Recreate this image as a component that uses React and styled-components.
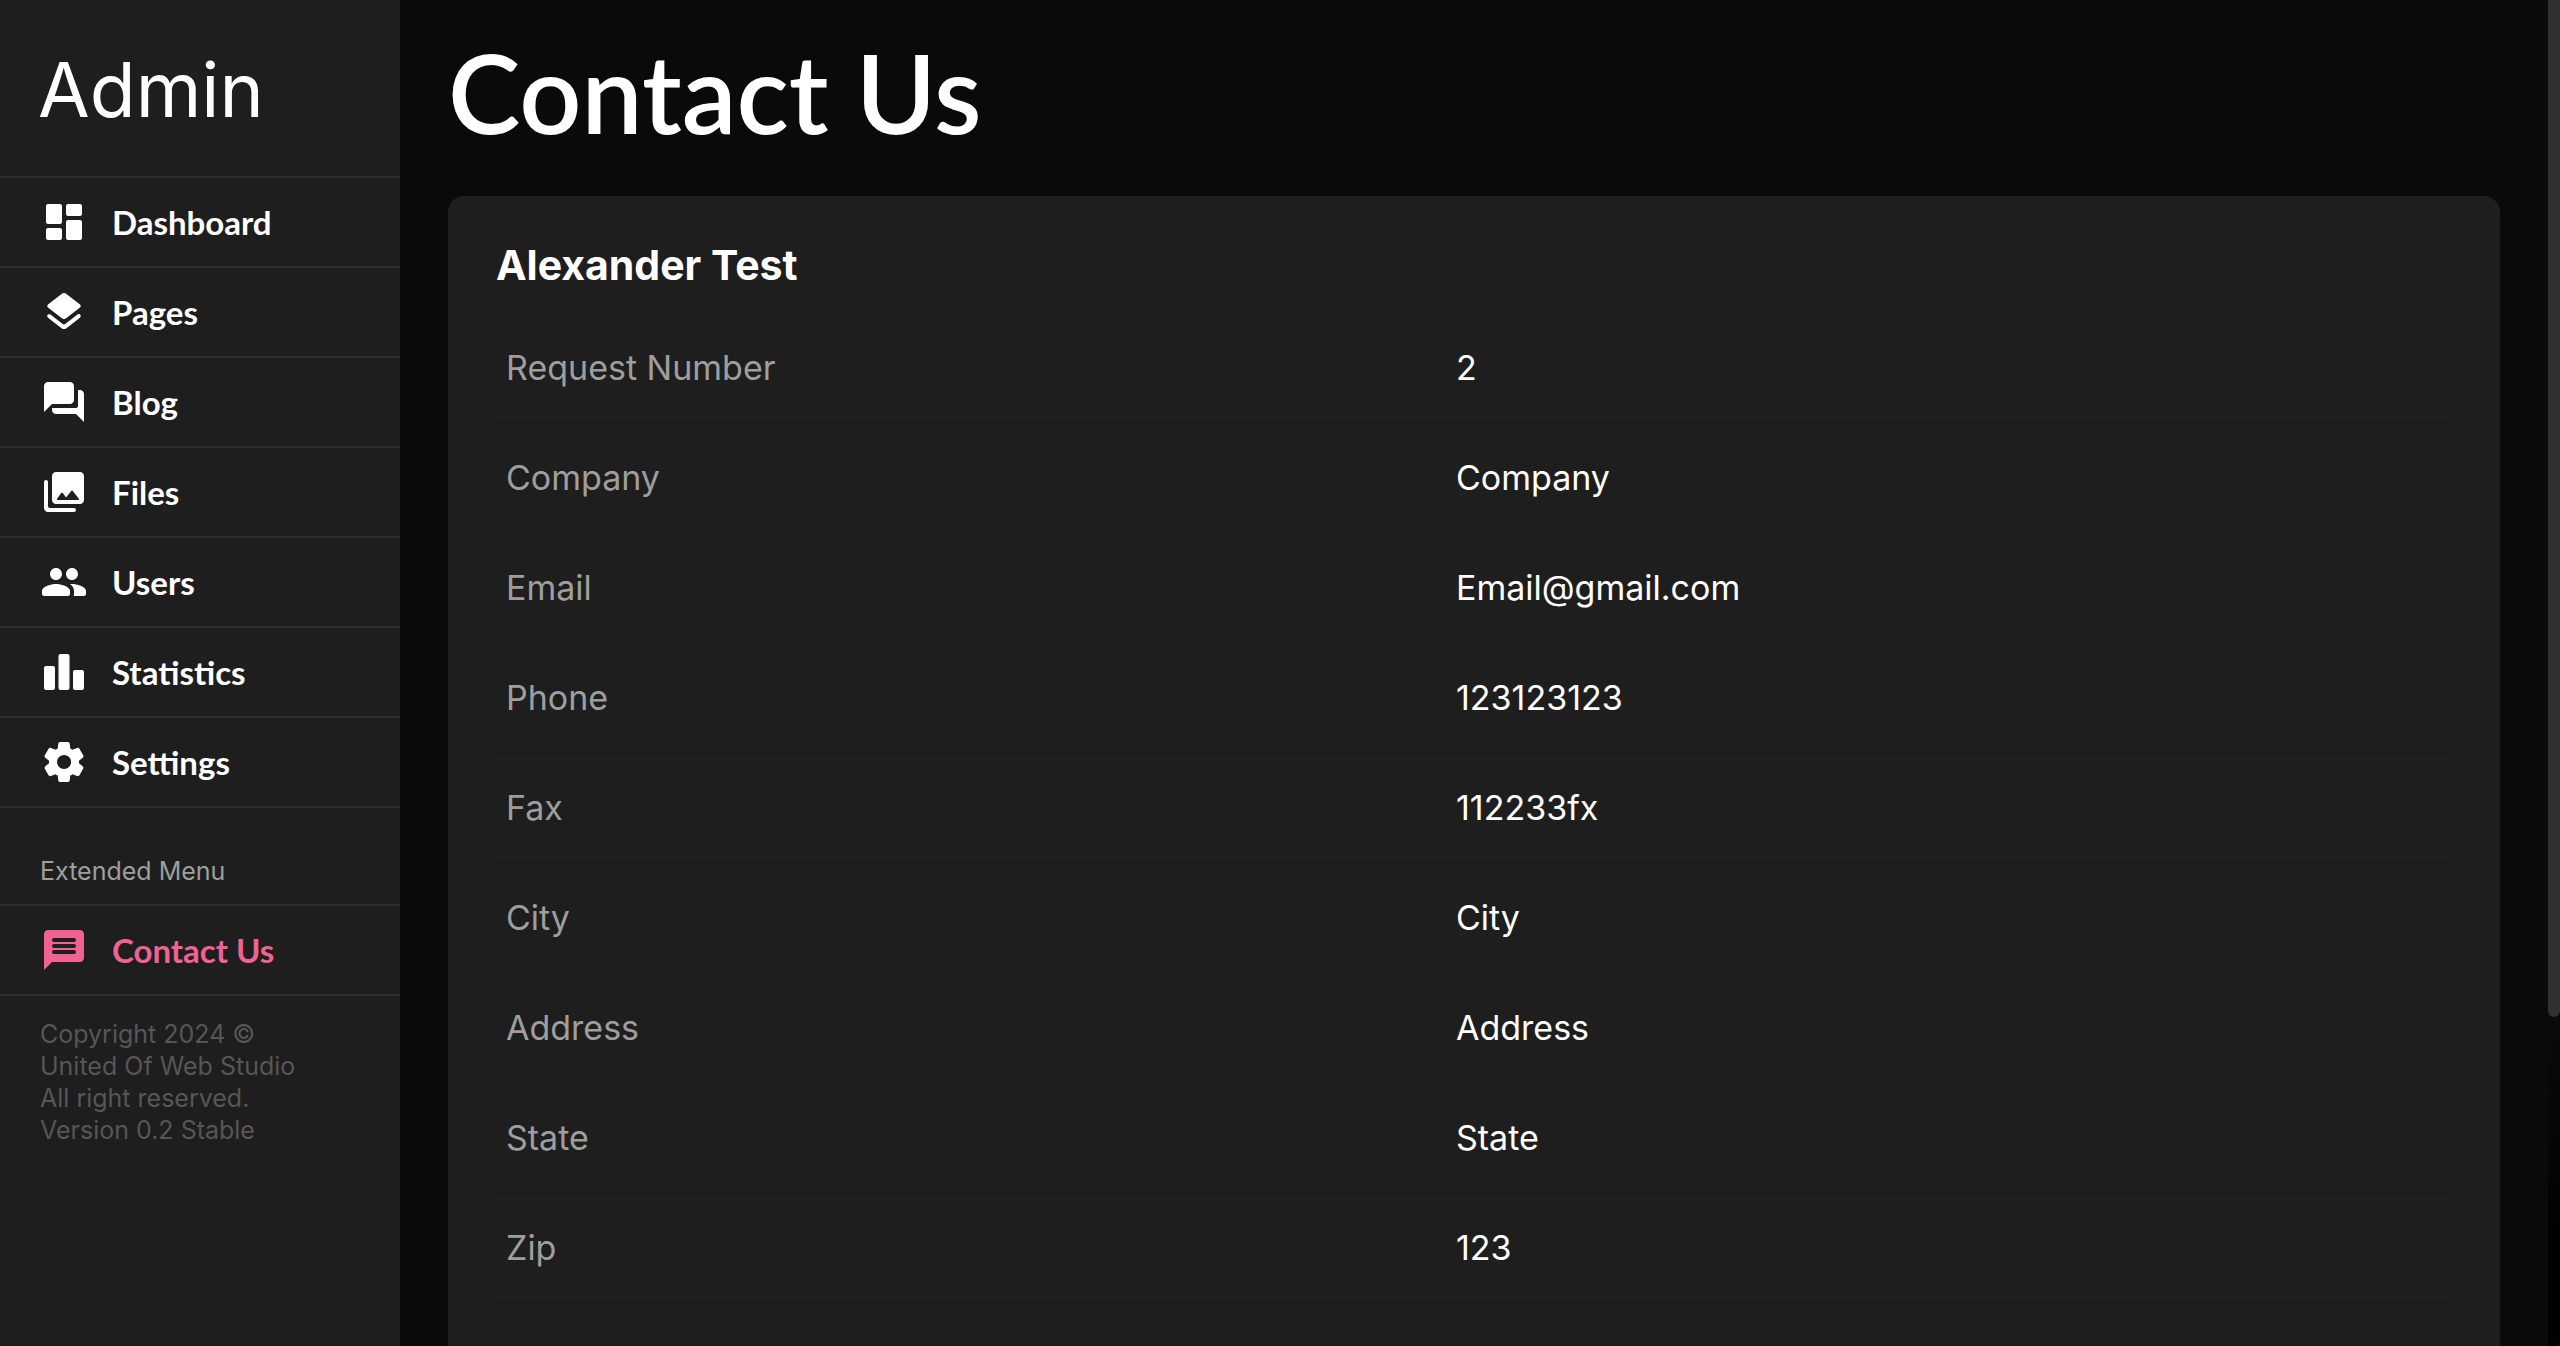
import * as React from 'react';
import styled, {createGlobalStyle} from "styled-components";

const GlobalStyle = createGlobalStyle`
  * {
    box-sizing: border-box;
  }

  body {
    margin: 0;
    background: #0a0a0a;
    color: #fff;
    font-family: Inter, "Open Sans", sans-serif;
  }
`

const Layout = styled.div`
  display: flex;
  height: 100vh;
  overflow: hidden;
`

const Sidebar = styled.aside`
  display: flex;
  flex-direction: column;
  flex: 0 0 400px;
  background: #1e1e1e;
`

const Brand = styled.div`
  padding: 50px 38px 46px;
  border-bottom: 2px solid #2e2e2e;
  font-size: 75px;
  font-weight: 400;
  line-height: 80px;
`

const Menu = styled.nav`
  display: flex;
  flex-direction: column;
`

const MenuLink = styled.a`
  display: flex;
  align-items: center;
  gap: 24px;
  height: 90px;
  padding: 0 40px;
  border-bottom: 2px solid #2e2e2e;
  color: ${props => props.$active ? "#f06292" : "#fff"};
  font-family: Lato, sans-serif;
  font-size: 33px;
  font-weight: 700;
  text-decoration: none;
`

const Icon = styled.svg`
  flex: none;
  width: 48px;
  height: 48px;
  fill: currentColor;
`

const MenuTitle = styled.div`
  padding: 46px 40px 16px;
  border-bottom: 2px solid #2e2e2e;
  color: #9e9e9e;
  font-size: 25px;
  line-height: 34px;
`

const Copyright = styled.div`
  padding: 22px 40px;
  color: #565656;
  font-size: 25px;
  line-height: 32px;
`

const Content = styled.main`
  display: flex;
  flex: 1;
  flex-direction: column;
  padding: 0 48px;
`

const PageTitle = styled.h1`
  margin: 0;
  padding: 32px 0 44px;
  font-family: Lato, sans-serif;
  font-size: 109px;
  font-weight: 600;
  line-height: 120px;
`

const Card = styled.section`
  flex: 1 0 auto;
  padding: 48px 48px 0;
  border-radius: 16px 16px 0 0;
  background: #1e1e1e;
`

const CardTitle = styled.h2`
  margin: 0 0 28px;
  font-size: 41px;
  font-weight: 700;
  line-height: 42px;
`

const Table = styled.table`
  width: 100%;
  border-spacing: 0;
  table-layout: fixed;
  font-size: 34px;
  text-align: left;

  th, td {
    height: 110px;
    padding: 0 10px 2px;
    border-bottom: 2px solid #1b1b1b;
  }

  th {
    width: 950px;
    color: #9e9e9e;
    font-weight: 400;
  }
`

const Track = styled.div`
  flex: 0 0 12px;
  border-radius: 0 0 6px 6px;
  background: linear-gradient(#0a0a0a 76%, #000 94%);
`

const Thumb = styled.div`
  height: 1017px;
  max-height: 76%;
  border-radius: 0 0 6px 6px;
  background: #303030;
`

const menu = [
    {
        name: "Dashboard",
        icon: "M4 13h6c.55 0 1-.45 1-1V4c0-.55-.45-1-1-1H4c-.55 0-1 .45-1 1v8c0 .55.45 1 1 1zm0 8h6c.55 0 1-.45 1-1v-4c0-.55-.45-1-1-1H4c-.55 0-1 .45-1 1v4c0 .55.45 1 1 1zm10 0h6c.55 0 1-.45 1-1v-8c0-.55-.45-1-1-1h-6c-.55 0-1 .45-1 1v8c0 .55.45 1 1 1zM13 4v4c0 .55.45 1 1 1h6c.55 0 1-.45 1-1V4c0-.55-.45-1-1-1h-6c-.55 0-1 .45-1 1z"
    },
    {
        name: "Pages",
        icon: "M12.6 18.06c-.36.28-.87.28-1.23 0l-6.15-4.78c-.36-.28-.86-.28-1.22 0-.51.4-.51 1.17 0 1.57l6.76 5.26c.72.56 1.73.56 2.46 0l6.76-5.26c.51-.4.51-1.17 0-1.57l-.01-.01c-.36-.28-.86-.28-1.22 0l-6.15 4.79zm.63-3.02l6.76-5.26c.51-.4.51-1.18 0-1.58l-6.76-5.26c-.72-.56-1.73-.56-2.46 0L4.01 8.21c-.51.4-.51 1.18 0 1.58l6.76 5.26c.72.56 1.74.56 2.46-.01z"
    },
    {
        name: "Blog",
        icon: "M20 6h-1v8c0 .55-.45 1-1 1H6v1c0 1.1.9 2 2 2h10l4 4V8c0-1.1-.9-2-2-2zm-3 5V4c0-1.1-.9-2-2-2H4c-1.1 0-2 .9-2 2v13l4-4h9c1.1 0 2-.9 2-2z"
    },
    {
        name: "Files",
        icon: "M22 16V4c0-1.1-.9-2-2-2H8c-1.1 0-2 .9-2 2v12c0 1.1.9 2 2 2h12c1.1 0 2-.9 2-2zm-10.6-3.47l1.63 2.18 2.58-3.22c.2-.25.58-.25.78 0l2.96 3.7c.26.33.03.81-.39.81H9c-.41 0-.65-.47-.4-.8l2-2.67c.2-.26.6-.26.8 0zM2 7v13c0 1.1.9 2 2 2h13c.55 0 1-.45 1-1s-.45-1-1-1H5c-.55 0-1-.45-1-1V7c0-.55-.45-1-1-1s-1 .45-1 1z"
    },
    {
        name: "Users",
        icon: "M16 11c1.66 0 2.99-1.34 2.99-3S17.66 5 16 5s-3 1.34-3 3 1.34 3 3 3zm-8 0c1.66 0 2.99-1.34 2.99-3S9.66 5 8 5 5 6.34 5 8s1.34 3 3 3zm0 2c-2.33 0-7 1.17-7 3.5V18c0 .55.45 1 1 1h12c.55 0 1-.45 1-1v-1.5c0-2.33-4.67-3.5-7-3.5zm8 0c-.29 0-.62.02-.97.05.02.01.03.03.04.04 1.14.83 1.93 1.94 1.93 3.41V18c0 .35-.07.69-.18 1H22c.55 0 1-.45 1-1v-1.5c0-2.33-4.67-3.5-7-3.5z"
    },
    {
        name: "Statistics",
        icon: "M6.5 21H3c-.55 0-1-.45-1-1V10c0-.55.45-1 1-1h3.5c.55 0 1 .45 1 1v10c0 .55-.45 1-1 1zm7.25-18h-3.5c-.55 0-1 .45-1 1v16c0 .55.45 1 1 1h3.5c.55 0 1-.45 1-1V4c0-.55-.45-1-1-1zM21 11h-3.5c-.55 0-1 .45-1 1v8c0 .55.45 1 1 1H21c.55 0 1-.45 1-1v-8c0-.55-.45-1-1-1z"
    },
    {
        name: "Settings",
        icon: "M19.5 12c0-.23-.01-.45-.03-.68l1.86-1.41c.4-.3.51-.86.26-1.3l-1.87-3.23c-.25-.44-.79-.62-1.25-.42l-2.15.91c-.37-.26-.76-.49-1.17-.68l-.29-2.31C14.8 2.38 14.37 2 13.87 2h-3.73c-.51 0-.94.38-1 .88l-.29 2.31c-.41.19-.8.42-1.17.68l-2.15-.91c-.46-.2-1-.02-1.25.42L2.41 8.62c-.25.44-.14.99.26 1.3l1.86 1.41c-.02.22-.03.44-.03.67s.01.45.03.68l-1.86 1.41c-.4.3-.51.86-.26 1.3l1.87 3.23c.25.44.79.62 1.25.42l2.15-.91c.37.26.76.49 1.17.68l.29 2.31c.06.5.49.88.99.88h3.73c.5 0 .93-.38.99-.88l.29-2.31c.41-.19.8-.42 1.17-.68l2.15.91c.46.2 1 .02 1.25-.42l1.87-3.23c.25-.44.14-.99-.26-1.3l-1.86-1.41c.03-.23.04-.45.04-.68zm-7.46 3.5c-1.93 0-3.5-1.57-3.5-3.5s1.57-3.5 3.5-3.5 3.5 1.57 3.5 3.5-1.57 3.5-3.5 3.5z"
    }
]

const extendedMenu = [
    {
        name: "Contact Us",
        active: true,
        icon: "M20 2H4c-1.1 0-1.99.9-1.99 2L2 22l4-4h14c1.1 0 2-.9 2-2V4c0-1.1-.9-2-2-2zm-3 12H7c-.55 0-1-.45-1-1s.45-1 1-1h10c.55 0 1 .45 1 1s-.45 1-1 1zm0-3H7c-.55 0-1-.45-1-1s.45-1 1-1h10c.55 0 1 .45 1 1s-.45 1-1 1zm0-3H7c-.55 0-1-.45-1-1s.45-1 1-1h10c.55 0 1 .45 1 1s-.45 1-1 1z"
    }
]

const contact = [
    ["Request Number", "2"],
    ["Company", "Company"],
    ["Email", "Email@gmail.com"],
    ["Phone", "123123123"],
    ["Fax", "112233fx"],
    ["City", "City"],
    ["Address", "Address"],
    ["State", "State"],
    ["Zip", "123"]
]

function MenuItem({item}) {
    return (
        <MenuLink href="#" $active={item.active}>
            <Icon viewBox="0 0 24 24" aria-hidden="true"><path d={item.icon}/></Icon>
            {item.name}
        </MenuLink>
    );
}

function App() {
    return (
        <Layout>
            <GlobalStyle/>
            <Sidebar>
                <Brand>Admin</Brand>
                <Menu>
                    {menu.map(item => <MenuItem key={item.name} item={item}/>)}
                </Menu>
                <MenuTitle>Extended Menu</MenuTitle>
                <Menu>
                    {extendedMenu.map(item => <MenuItem key={item.name} item={item}/>)}
                </Menu>
                <Copyright>
                    Copyright 2024 ©<br/>
                    United Of Web Studio<br/>
                    All right reserved.<br/>
                    Version 0.2 Stable
                </Copyright>
            </Sidebar>
            <Content>
                <PageTitle>Contact Us</PageTitle>
                <Card>
                    <CardTitle>Alexander Test</CardTitle>
                    <Table>
                        <tbody>
                        {contact.map(([label, value]) =>
                            <tr key={label}>
                                <th scope="row">{label}</th>
                                <td>{value}</td>
                            </tr>
                        )}
                        </tbody>
                    </Table>
                </Card>
            </Content>
            <Track><Thumb/></Track>
        </Layout>
    );
}

export default App;
